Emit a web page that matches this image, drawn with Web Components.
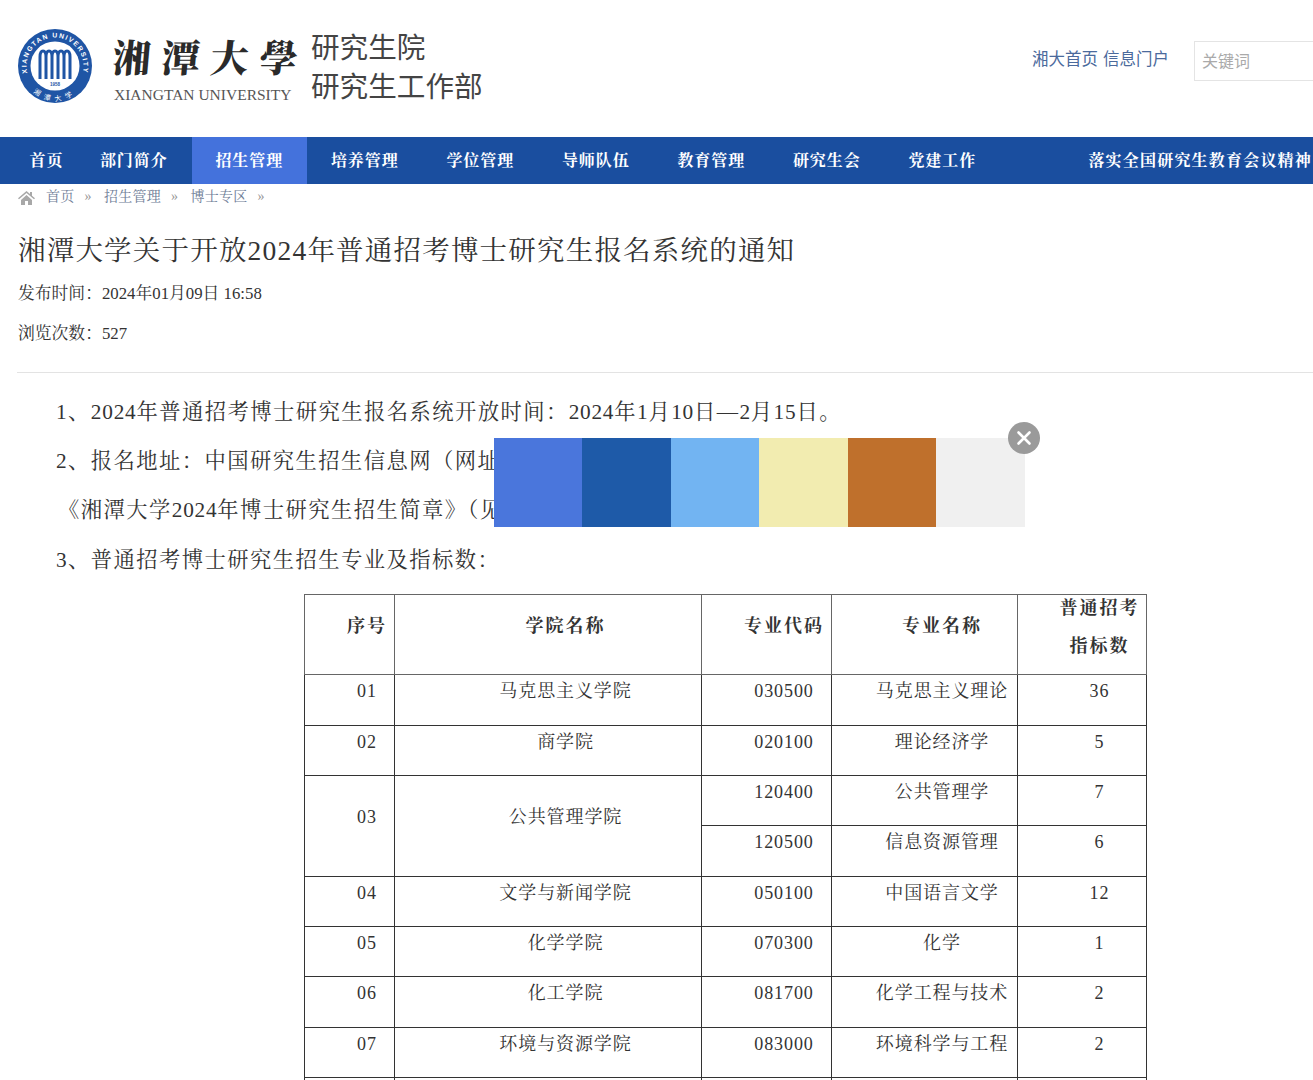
<!DOCTYPE html>
<html lang="zh-CN"><head><meta charset="utf-8"><title>通知</title>
<style>
html,body{margin:0;padding:0;background:#fff;height:1080px;overflow:hidden}
body{font-family:"Noto Serif CJK SC","Liberation Serif","Noto Sans CJK SC",serif;color:#333;width:1313px}
.n{letter-spacing:.75px}
</style></head><body>
<site-header></site-header>
<site-nav></site-nav>
<bread-crumb></bread-crumb>
<article-head title-text="湘潭大学关于开放2024年普通招考博士研究生报名系统的通知" date="发布时间：2024年01月09日 16:58" views="浏览次数：527"></article-head>
<article-body>
<notice-line>1、<span class="n">2024</span>年普通招考博士研究生报名系统开放时间：<span class="n">2024</span>年<span class="n">1</span>月<span class="n">10</span>日—<span class="n">2</span>月<span class="n">15</span>日。</notice-line>
<notice-line>2、报名地址：中国研究生招生信息网（网址：yz.chsi.com.cn）；</notice-line>
<notice-line class="p3">《湘潭大学<span class="n">2024</span>年博士研究生招生简章》（见附件）。</notice-line>
<notice-line>3、普通招考博士研究生招生专业及指标数：</notice-line>
<major-table></major-table>
</article-body>
<color-palette></color-palette>
<script>
const SERIF='"Liberation Serif","Noto Serif CJK SC","Noto Sans CJK SC",serif';
function def(name,html){customElements.define(name,class extends HTMLElement{constructor(){super();this.attachShadow({mode:'open'}).innerHTML=typeof html==='function'?html(this):html;}})}

def('uni-logo',`<style>:host{display:block;width:74px;height:74px}svg{display:block}</style>
<svg viewBox="0 0 74 74" width="74" height="74">
<circle cx="37" cy="37" r="37" fill="#1f55a5"/>
<circle cx="37" cy="37" r="24.5" fill="#fff"/>
<defs><path id="t" d="M9.100 43A28.500 28.500 0 1 1 64.900 43"/><path id="b" d="M6 41A31 31 0 0 0 68 41"/></defs>
<text font-family="Liberation Sans" font-size="6.800" font-weight="700" fill="#fff" letter-spacing="1.350"><textPath href="#t" startOffset="50%" text-anchor="middle">XIANGTAN UNIVERSITY</textPath></text>
<text font-family="Noto Sans CJK SC" font-size="7" fill="#fff" letter-spacing="5"><textPath href="#b" startOffset="50%" text-anchor="middle">湘潭大学</textPath></text>
<path d="M22 50V28c0-8 6-8 6 0v22M28 28c0-8 6-8 6 0v22M34 28c0-8 6-8 6 0v22M40 28c0-8 6-8 6 0v22M46 28c0-8 6-8 6 0v22" fill="none" stroke="#1f55a5" stroke-width="3"/>
<text x="37" y="57" font-family="Liberation Sans" font-size="4.500" font-weight="700" fill="#1f55a5" text-anchor="middle">1958</text>
</svg>`);

def('site-header',`<style>
:host{display:flex;height:137px;box-sizing:border-box;padding:28px 0 0 18px;align-items:flex-start;overflow:hidden}
uni-logo{margin-top:1px}
.brand{width:197px;margin-left:21px}
.cal{font:900 38px/50px "Noto Serif CJK SC","Noto Sans CJK SC",serif;color:#2a2a2a;letter-spacing:11px;white-space:nowrap;height:50px;margin-top:3px;transform:skewX(-5deg);transform-origin:left}
.en{font:15.500px/18px "Liberation Serif",serif;color:#555;margin:4.500px 0 0 1px;white-space:nowrap}
.dept{font:28.600px/39px "Noto Sans CJK SC",sans-serif;color:#444;margin-left:1px;margin-top:-2px}
.right{margin-left:auto;display:flex;align-items:flex-start;padding-top:13px}
.links{font:16.500px/36px "Noto Sans CJK SC",sans-serif;color:#4b6a9c;margin:-1px 25px 0 0;white-space:nowrap}
.links span+span{margin-left:5px}
.search{width:119px;height:40px;box-sizing:border-box;border:1px solid #e4e4e4;border-right:0;font:16px/36px "Noto Sans CJK SC",sans-serif;color:#aaa;padding-left:7px}
</style>
<uni-logo></uni-logo>
<div class="brand"><div class="cal">湘潭大學</div><div class="en">XIANGTAN UNIVERSITY</div></div>
<div class="dept"><div>研究生院</div><div>研究生工作部</div></div>
<div class="right"><div class="links"><span>湘大首页</span><span>信息门户</span></div><div class="search">关键词</div></div>`);

def('nav-item',`<style>
:host{display:block;flex:none;box-sizing:border-box;width:115.500px;text-align:center;font:700 16px/47px ${SERIF};color:#fff;letter-spacing:.9px;white-space:nowrap}
:host([active]){background:#4472dc}
:host([wide]){width:auto;margin-left:auto;padding-right:1px;letter-spacing:1.200px}
:host([first]){width:59px}
</style><slot></slot>`);

def('site-nav',`<style>
:host{display:flex;height:47px;background:#1a4e9f;padding-left:17px;overflow:hidden;box-sizing:border-box}
</style>
<nav-item first>首页</nav-item><nav-item>部门简介</nav-item><nav-item active>招生管理</nav-item><nav-item>培养管理</nav-item><nav-item>学位管理</nav-item><nav-item>导师队伍</nav-item><nav-item>教育管理</nav-item><nav-item>研究生会</nav-item><nav-item>党建工作</nav-item><nav-item wide>落实全国研究生教育会议精神</nav-item>`);

def('bread-crumb',`<style>
:host{display:flex;align-items:center;height:26px;padding-left:18px;font:14px/26px ${SERIF};color:#6f7e97;white-space:nowrap}
svg{margin-right:11px;margin-top:2px}
span{letter-spacing:.25px}
i{font-style:normal;color:#999;margin:0 12.500px 0 10px;font-size:14px}
</style>
<svg width="17" height="14" viewBox="0 0 17 14"><path d="M8.500 0 0 7.200l1 1.100L8.500 2l7.500 6.300 1-1.100-3-2.500V1h-2v2Z M3 9l5.500-5L14 9v5H10V10H7v4H3Z" fill="#a8a8a8"/></svg>
<span>首页</span><i>»</i><span>招生管理</span><i>»</i><span>博士专区</span><i>»</i>`);

def('article-head',h=>`<style>
:host{display:block;margin:0 0 0 17px;border-bottom:1px solid #e3e3e3;height:163px;box-sizing:border-box;color:#333}
h1{margin:0;padding:23.500px 0 0 1px;font:400 27.500px/34px ${SERIF};letter-spacing:1.200px;white-space:nowrap}
p{margin:0;padding-left:1px;font:16.800px/24px ${SERIF};white-space:nowrap}
.d{margin-top:14.500px}.v{margin-top:16px}
</style><h1>${h.getAttribute('title-text')}</h1><p class="d">${h.getAttribute('date')}</p><p class="v">${h.getAttribute('views')}</p>`);

def('article-body',`<style>:host{display:block;padding-top:14.500px}</style><slot></slot>`);

def('notice-line',`<style>
:host{display:block;padding-left:56px;font:21.300px/49.400px ${SERIF};letter-spacing:1.450px;color:#333;white-space:nowrap}
:host(.p3){padding-left:58px}
</style><slot></slot>`);

const rows=[['01','马克思主义学院','030500','马克思主义理论','36'],['02','商学院','020100','理论经济学','5'],['03','公共管理学院','120400','公共管理学','7'],[null,null,'120500','信息资源管理','6'],['04','文学与新闻学院','050100','中国语言文学','12'],['05','化学学院','070300','化学','1'],['06','化工学院','081700','化学工程与技术','2'],['07','环境与资源学院','083000','环境科学与工程','2'],['','','','','']];
def('major-table',`<style>
:host{display:block;margin:9px 0 0 304px;width:844px}
table{border-collapse:collapse;table-layout:fixed;width:843px;font:18px/26px ${SERIF};color:#333}
td,th{border:1px solid #333;padding:3px 0 0;height:46.400px;vertical-align:top;text-align:center;letter-spacing:.9px;box-sizing:content-box;text-indent:35px}
th{font-weight:700;font-family:"Noto Serif CJK SC","Noto Sans CJK SC",serif;letter-spacing:2px;border-color:#666;padding:16px 0 0;height:63px}
th.two{padding:0;line-height:22px}
th.two div{margin-top:16px}
td.m{vertical-align:middle;padding:0 0 18px;height:auto}
</style><table><colgroup><col style="width:90px"><col style="width:307px"><col style="width:130px"><col style="width:186px"><col style="width:129px"></colgroup>
<tr><th>序号</th><th>学院名称</th><th>专业代码</th><th>专业名称</th><th class="two">普通招考<div>指标数</div></th></tr>
${rows.map(r=>`<tr>${r[0]===null?'':(r[0]==='03'?`<td class="m" rowspan="2">${r[0]}</td><td class="m" rowspan="2">${r[1]}</td>`:`<td>${r[0]}</td><td>${r[1]}</td>`)}<td>${r[2]}</td><td>${r[3]}</td><td>${r[4]}</td></tr>`).join('')}</table>`);

def('color-palette',`<style>
:host{position:absolute;left:494px;top:438px;width:530.500px;height:89px;display:flex}
b{flex:1}
.close{position:absolute;right:-15.500px;top:-16px;width:32px;height:32px;border-radius:50%;background:#9a9a9a;display:flex;align-items:center;justify-content:center}
</style><b style="background:#4a76dc"></b><b style="background:#1e5aa8"></b><b style="background:#72b4f2"></b><b style="background:#f2ecb0"></b><b style="background:#bf702c"></b><b style="background:#f0f0f0"></b>
<div class="close"><svg width="16" height="16" viewBox="0 0 16 16"><path d="M2.500 2.500l11 11M13.500 2.500l-11 11" stroke="#fff" stroke-width="2.600" stroke-linecap="round"/></svg></div>`);
</script>
</body></html>
